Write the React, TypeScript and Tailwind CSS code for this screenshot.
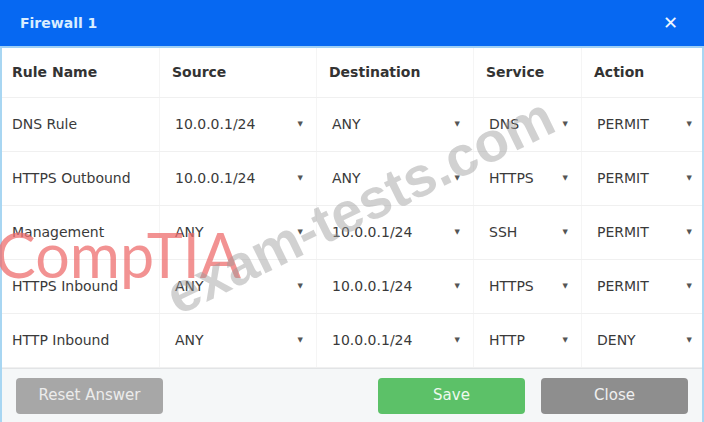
import React from 'react';

const rules = [
  { name: 'DNS Rule', source: '10.0.0.1/24', dest: 'ANY', service: 'DNS', action: 'PERMIT' },
  { name: 'HTTPS Outbound', source: '10.0.0.1/24', dest: 'ANY', service: 'HTTPS', action: 'PERMIT' },
  { name: 'Management', source: 'ANY', dest: '10.0.0.1/24', service: 'SSH', action: 'PERMIT' },
  { name: 'HTTPS Inbound', source: 'ANY', dest: '10.0.0.1/24', service: 'HTTPS', action: 'PERMIT' },
  { name: 'HTTP Inbound', source: 'ANY', dest: '10.0.0.1/24', service: 'HTTP', action: 'DENY' },
];

const cols = 'grid grid-cols-[158px_157px_157px_108px_1fr]';

const SelectCell = ({ value, last }: { value: string; last?: boolean }) => (
  <div className={`flex items-center justify-between pl-[15px] ${last ? 'pr-[10px]' : 'pr-[13px] border-r border-[#f5f5f5]'}`}>
    <span>{value}</span>
    <span className="text-[7px] text-[#555]">▼</span>
  </div>
);

const App: React.FC = () => {
  return (
    <div
      className="relative w-[704px] h-[422px] overflow-hidden bg-white text-[#333]"
      style={{ fontFamily: '"DejaVu Sans", Verdana, sans-serif' }}
    >
      <header className="h-[48px] bg-[#0668f2] flex items-center justify-between pl-[20px] pr-[26px] border-b-2 border-[#9fd0f5]">
        <h1 className="text-[14px] font-bold text-[#d9edff]">Firewall 1</h1>
        <span className="text-[18px] font-bold text-[#eef6ff] leading-none">✕</span>
      </header>

      <div className="border-x-2 border-[#a8d6f2] h-[374px] flex flex-col">
        <div className={`${cols} h-[50px] border-b border-[#f0f0f0] text-[14px] font-bold`}>
          <div className="flex items-center pl-[10px] border-r border-[#f5f5f5]">Rule Name</div>
          <div className="flex items-center pl-[12px] border-r border-[#f5f5f5]">Source</div>
          <div className="flex items-center pl-[12px] border-r border-[#f5f5f5]">Destination</div>
          <div className="flex items-center pl-[12px] border-r border-[#f5f5f5]">Service</div>
          <div className="flex items-center pl-[12px]">Action</div>
        </div>

        {rules.map((r) => (
          <div key={r.name} className={`${cols} h-[54px] border-b border-[#f0f0f0] text-[14px] text-[#3a3a3a]`}>
            <div className="flex items-center pl-[10px] border-r border-[#f5f5f5]">{r.name}</div>
            <SelectCell value={r.source} />
            <SelectCell value={r.dest} />
            <SelectCell value={r.service} />
            <SelectCell value={r.action} last />
          </div>
        ))}

        <footer className="flex-1 bg-[#f5f7f8] border-t border-[#e2e4e6] flex items-center pl-[14px] pr-[14px]">
          <button className="w-[147px] h-[36px] rounded-[4px] bg-[#a7a7a7] text-[15px] text-[#ececec]">Reset Answer</button>
          <div className="flex-1" />
          <button className="w-[147px] h-[36px] rounded-[4px] bg-[#5cc168] text-[15px] text-[#eef9ee]">Save</button>
          <button className="ml-[16px] w-[147px] h-[36px] rounded-[4px] bg-[#8e8e8e] text-[15px] text-[#f0f0f0]">Close</button>
        </footer>
      </div>

      {/* watermarks */}
      <div
        className="pointer-events-none absolute left-[-5px] top-[224px] text-[61px] leading-none text-[#ee6e6e]/75"
        style={{ fontFamily: 'Lato, sans-serif' }}
      >
        CompTIA
      </div>
      <div
        className="pointer-events-none absolute left-[145px] top-[178px] w-[430px] text-center text-[56px] font-bold leading-none text-[#9a9a9a]/45 rotate-[-26deg]"
        style={{ fontFamily: '"Liberation Sans", Arial, sans-serif' }}
      >
        exam-tests.com
      </div>
    </div>
  );
};

export default App;
